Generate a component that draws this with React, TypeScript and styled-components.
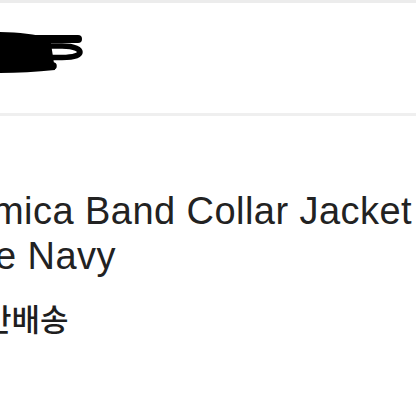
import React from "react";
import styled, { createGlobalStyle } from "styled-components";

const GlobalStyle = createGlobalStyle`
  html, body {
    margin: 0;
    padding: 0;
    background: #ffffff;
  }
  body {
    font-family: "Liberation Sans", Arial, sans-serif;
    overflow: hidden;
  }
`;

const Page = styled.div`
  width: 416px;
  height: 416px;
  overflow: hidden;
  display: flex;
  flex-direction: column;
  background: #ffffff;
`;

const TopBand = styled.div`
  height: 3px;
  background: #ececec;
  flex-shrink: 0;
`;

const Header = styled.div`
  height: 110px;
  display: flex;
  align-items: flex-start;
  padding-top: 25px;
  box-sizing: border-box;
  flex-shrink: 0;
`;

const Divider = styled.div`
  height: 3px;
  background: #efefef;
  flex-shrink: 0;
`;

const Body = styled.div`
  display: flex;
  flex-direction: column;
  padding-top: 73px;
`;

const Title = styled.div`
  font-family: "Liberation Sans", Arial, sans-serif;
  font-size: 38px;
  line-height: 45px;
  letter-spacing: 0.45px;
  color: #222222;
  white-space: nowrap;
`;

const TitleLine = styled.div<{ $shift: number }>`
  margin-left: ${({ $shift }) => $shift}px;
`;

const Shipping = styled.div`
  margin-top: 24px;
  margin-left: -17px;
  font-family: "Noto Sans CJK KR", "Noto Sans", sans-serif;
  font-size: 31px;
  font-weight: 500;
  line-height: 30px;
  color: #1e1e1e;
  white-space: nowrap;
`;

const Redaction = () => (
  <svg width="92" height="50" viewBox="0 0 92 50">
    <path d="M0 4 C20 4 34 7 50 9 L55 42 C36 44 18 45 0 45 Z" fill="#000" />
    <path d="M18 11 L78 11" stroke="#000" strokeWidth="8" strokeLinecap="round" />
    <path
      d="M30 18 L62 18 C76 18 80 22 80 24 C80 27 74 29.5 62 29.5 L30 29.5"
      stroke="#000"
      strokeWidth="5.5"
      strokeLinecap="round"
      fill="none"
    />
    <path d="M20 38 L53 38" stroke="#000" strokeWidth="7.5" strokeLinecap="round" />
  </svg>
);

export default function App() {
  return (
    <Page>
      <GlobalStyle />
      <TopBand />
      <Header>
        <Redaction />
      </Header>
      <Divider />
      <Body>
        <Title>
          <TitleLine $shift={-8}>mica Band Collar Jacket</TitleLine>
          <TitleLine $shift={-5}>e Navy</TitleLine>
        </Title>
        <Shipping>반배송</Shipping>
      </Body>
    </Page>
  );
}
